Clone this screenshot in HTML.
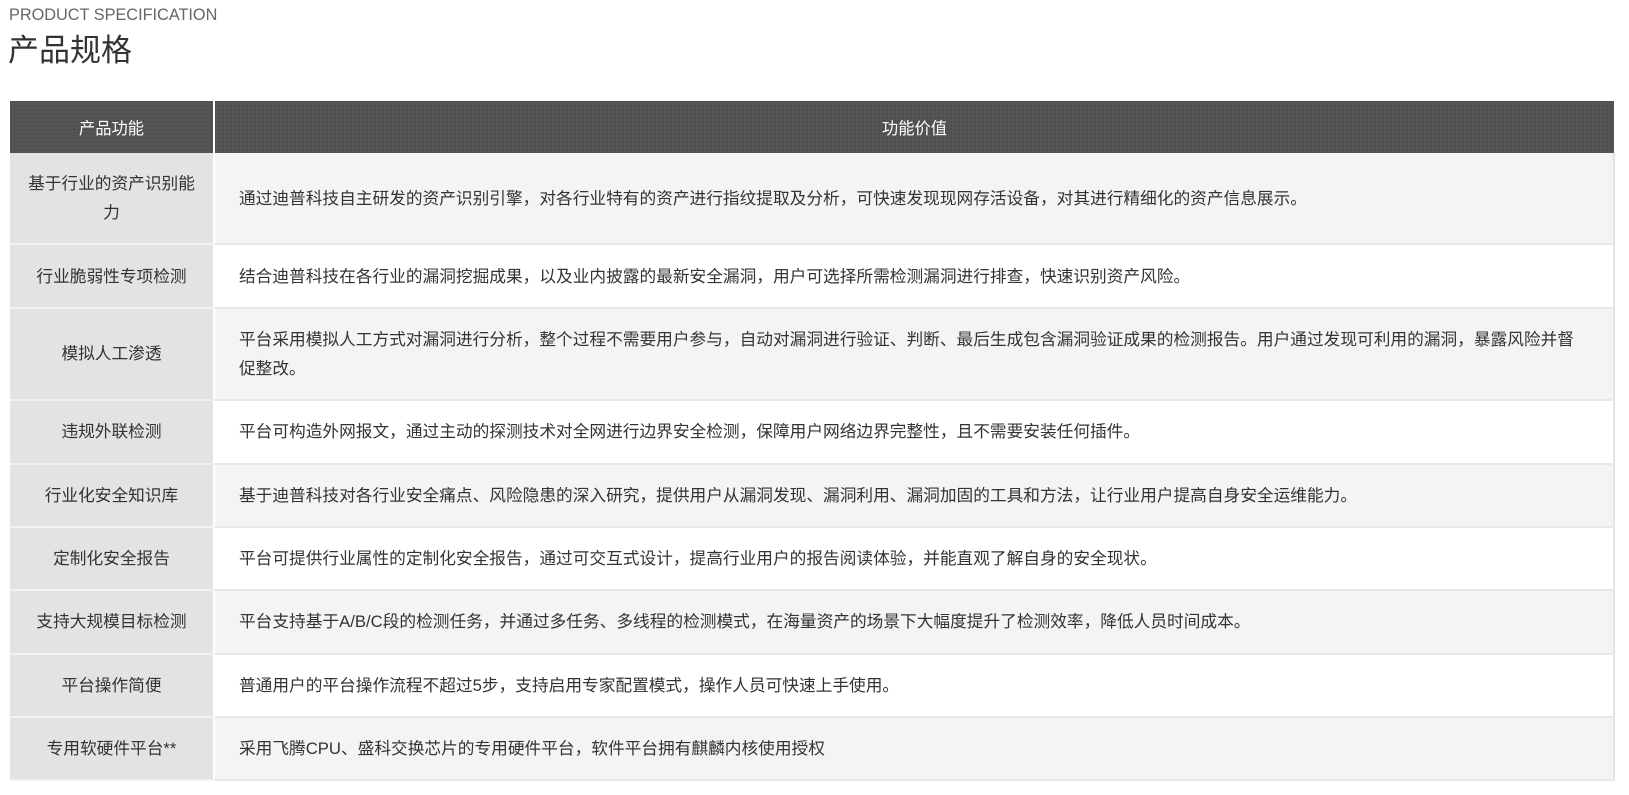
<!DOCTYPE html>
<html><head><meta charset="utf-8"><style>
body{margin:0;background:#fff;font-family:"Liberation Sans","Noto Sans CJK SC",sans-serif;color:#333;width:1629px;height:795px;overflow:hidden}
.en{position:absolute;left:9px;top:6px;font-size:16.3px;color:#666}
.cn{position:absolute;left:8px;top:25px;font-size:31px;color:#333}
table{position:absolute;left:10px;top:101px;width:1605px;border-collapse:collapse;font-size:16.7px;table-layout:fixed}
th{height:52px;color:#fff;font-weight:normal;font-size:16.3px;background-color:#555;background-image:linear-gradient(90deg,rgba(0,0,0,.07) 1px,transparent 1px),linear-gradient(rgba(0,0,0,.07) 1px,transparent 1px);background-size:4px 4px;padding:0}
th+th{border-left:2px solid #fff}
td{line-height:29px;padding:16.2px 0 16.2px;border-bottom:2px solid #e8e8e8}
td:first-child{background:#e3e3e3;text-align:center;padding-left:14px;padding-right:14px;border-bottom-color:#f2f2f2}
td+td{border-left:2px solid #fff;padding-left:24px;padding-right:20px;border-right:2px solid #e4e4e4}
tr:nth-child(odd) td+td{background:#f4f4f4}
tr:nth-child(even) td+td{background:#fff}
</style></head><body>
<div class="en">PRODUCT SPECIFICATION</div>
<div class="cn">产品规格</div>
<table>
<colgroup><col style="width:204px"><col></colgroup>
<thead><tr><th>产品功能</th><th>功能价值</th></tr></thead>
<tbody>
<tr><td>基于行业的资产识别能力</td><td>通过迪普科技自主研发的资产识别引擎，对各行业特有的资产进行指纹提取及分析，可快速发现现网存活设备，对其进行精细化的资产信息展示。</td></tr>
<tr><td>行业脆弱性专项检测</td><td>结合迪普科技在各行业的漏洞挖掘成果，以及业内披露的最新安全漏洞，用户可选择所需检测漏洞进行排查，快速识别资产风险。</td></tr>
<tr><td>模拟人工渗透</td><td><span style="white-space:nowrap">平台采用模拟人工方式对漏洞进行分析，整个过程不需要用户参与，自动对漏洞进行验证、判断、最后生成包含漏洞验证成果的检测报告。用户通过发现可利用的漏洞，暴露风险并督</span><br>促整改。</td></tr>
<tr><td>违规外联检测</td><td>平台可构造外网报文，通过主动的探测技术对全网进行边界安全检测，保障用户网络边界完整性，且不需要安装任何插件。</td></tr>
<tr><td>行业化安全知识库</td><td>基于迪普科技对各行业安全痛点、风险隐患的深入研究，提供用户从漏洞发现、漏洞利用、漏洞加固的工具和方法，让行业用户提高自身安全运维能力。</td></tr>
<tr><td>定制化安全报告</td><td>平台可提供行业属性的定制化安全报告，通过可交互式设计，提高行业用户的报告阅读体验，并能直观了解自身的安全现状。</td></tr>
<tr><td>支持大规模目标检测</td><td>平台支持基于A/B/C段的检测任务，并通过多任务、多线程的检测模式，在海量资产的场景下大幅度提升了检测效率，降低人员时间成本。</td></tr>
<tr><td>平台操作简便</td><td>普通用户的平台操作流程不超过5步，支持启用专家配置模式，操作人员可快速上手使用。</td></tr>
<tr><td>专用软硬件平台**</td><td>采用飞腾CPU、盛科交换芯片的专用硬件平台，软件平台拥有麒麟内核使用授权</td></tr>
</tbody></table>
</body></html>
